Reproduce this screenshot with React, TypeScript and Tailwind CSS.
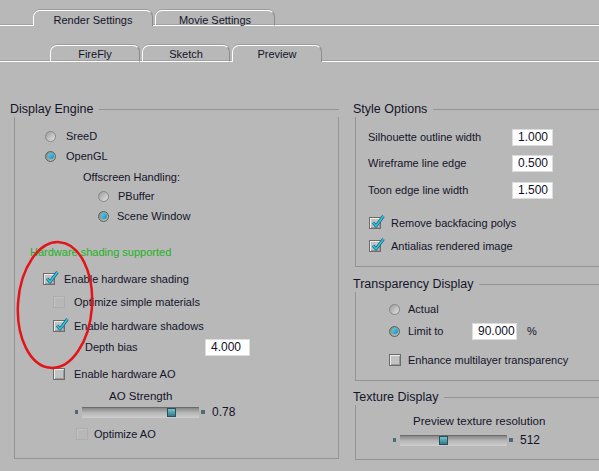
import React from "react";

const line = "border-[#949494]";

function Radio({ on }: { on?: boolean }) {
  return (
    <span
      className={
        on
          ? "flex h-[11px] w-[11px] shrink-0 items-center justify-center rounded-full border border-[#56645a] bg-gradient-to-br from-[#7d8a80] to-[#b9c4bc]"
          : "flex h-[11px] w-[11px] shrink-0 items-center justify-center rounded-full border border-[#858585] bg-gradient-to-br from-[#9c9c9c] to-[#e4e4e4]"
      }
    >
      {on && (
        <span className="h-[6px] w-[6px] rounded-full bg-gradient-to-br from-[#5fd0f4] to-[#1488c8]" />
      )}
    </span>
  );
}

function Check({ on, dim }: { on?: boolean; dim?: boolean }) {
  return (
    <span
      className={
        dim
          ? "relative block h-[12px] w-[12px] shrink-0 border border-[#adadad] shadow-[inset_1px_1px_0_#c2c2c2]"
          : "relative block h-[12px] w-[12px] shrink-0 border border-[#6c6c6c] bg-[#c2c2c2] shadow-[inset_1px_1px_0_#ececec,inset_-1px_-1px_0_#9a9a9a]"
      }
    >
      {on && (
        <svg
          className="absolute left-[1px] top-[-4px]"
          width="14"
          height="15"
          viewBox="0 0 14 15"
        >
          <path
            d="M2 8.5 L5 12 L12.5 2"
            fill="none"
            stroke="#2b5e6a"
            strokeWidth="3"
            strokeLinejoin="round"
          />
          <path
            d="M2 8.5 L5 12 L12.5 2"
            fill="none"
            stroke="#1fcbef"
            strokeWidth="1.6"
            strokeLinejoin="round"
          />
        </svg>
      )}
    </span>
  );
}

function Field({ value, className }: { value: string; className: string }) {
  return (
    <div
      className={`flex h-[17px] items-center border border-[#dcdcdc] bg-white pl-[5px] text-[12px] text-[#10102a] ${className}`}
    >
      {value}
    </div>
  );
}

function Slider({
  track,
  thumb,
  value,
}: {
  track: string;
  thumb: string;
  value: string;
}) {
  return (
    <div className="flex h-[12px] items-center">
      <span className="h-[4px] w-[3px] bg-[#4d6b72]" />
      <div
        className={`ml-[4px] flex h-[11px] items-center rounded-[1px] bg-gradient-to-b from-[#7e7e7e] via-[#b4b4b4] to-[#cfcfcf] shadow-[inset_0_1px_0_#6a6a6a] ${track}`}
      >
        <span
          className={`h-[9px] w-[9px] border border-[#24505a] bg-gradient-to-b from-[#7cc0cc] to-[#2f7d8c] ${thumb}`}
        />
      </div>
      <span className="ml-[2px] h-[4px] w-[4px] bg-[#4d6b72]" />
      <span className="ml-[7px] text-[12px]">{value}</span>
    </div>
  );
}

function Title({ text, shift }: { text: string; shift: string }) {
  return (
    <div className="flex h-[16px]">
      <span className={`pr-[6px] text-[12.5px] leading-[16px] ${shift}`}>
        {text}
      </span>
      <div className={`mt-[8px] flex-1 border-t ${line}`} />
    </div>
  );
}

export default function App() {
  return (
    <div className="relative h-[471px] w-[599px] overflow-hidden bg-[#b8b8b8] font-['Liberation_Sans',Arial,sans-serif] text-[11px] text-[#14142a]">
      {/* top tabs */}
      <div className="flex h-[26px] items-end">
        <div className="h-[2px] w-[33px] border-b border-white bg-[#a2a2a2]" />
        <div className="h-[16px] w-[120px] rounded-t-[7px] border-x border-t border-white border-r-[#8c8c8c] pt-[2px] text-center leading-[14px] shadow-[0_-1px_0_#9c9c9c]">
          Render Settings
        </div>
        <div className="h-[2px] w-[2px] border-b border-white bg-[#a2a2a2]" />
        <div className="h-[16px] w-[120px] rounded-t-[7px] border border-white border-r-[#8c8c8c] pt-[2px] text-center leading-[14px] shadow-[0_-1px_0_#9c9c9c,inset_0_-1px_0_#a2a2a2]">
          Movie Settings
        </div>
        <div className="h-[2px] flex-1 border-b border-white bg-[#a2a2a2]" />
      </div>
      <div className="flex h-[36px] items-end">
        <div className="h-[2px] w-[50px] border-b border-white bg-[#a2a2a2]" />
        <div className="h-[17px] w-[90px] rounded-t-[7px] border border-white border-r-[#8c8c8c] pt-[1px] text-center leading-[14px] shadow-[0_-1px_0_#9c9c9c,inset_0_-1px_0_#a2a2a2]">
          FireFly
        </div>
        <div className="h-[2px] w-[2px] border-b border-white bg-[#a2a2a2]" />
        <div className="h-[17px] w-[88px] rounded-t-[7px] border border-white border-r-[#8c8c8c] pt-[1px] text-center leading-[14px] shadow-[0_-1px_0_#9c9c9c,inset_0_-1px_0_#a2a2a2]">
          Sketch
        </div>
        <div className="h-[2px] w-[2px] border-b border-white bg-[#a2a2a2]" />
        <div className="h-[17px] w-[90px] rounded-t-[7px] border-x border-t border-white border-r-[#8c8c8c] pt-[1px] text-center leading-[14px] shadow-[0_-1px_0_#9c9c9c]">
          Preview
        </div>
        <div className="h-[2px] flex-1 border-b border-white bg-[#a2a2a2]" />
      </div>

      <div className="mt-[39px] flex">
        {/* Display Engine */}
        <div className="ml-[14px] w-[325px] shrink-0">
          <Title text="Display Engine" shift="-ml-[4px]" />
          <div className={`flex h-[342px] flex-col border-x border-b ${line}`}>
            <div className="mt-[11px] flex h-[16px] items-center pl-[30px]">
              <Radio />
              <span className="ml-[10px]">SreeD</span>
            </div>
            <div className="mt-[4px] flex h-[16px] items-center pl-[30px]">
              <Radio on />
              <span className="ml-[10px]">OpenGL</span>
            </div>
            <div className="mt-[5px] flex h-[16px] items-center pl-[68px]">
              Offscreen Handling:
            </div>
            <div className="mt-[3px] flex h-[16px] items-center pl-[83px]">
              <Radio />
              <span className="ml-[9px]">PBuffer</span>
            </div>
            <div className="mt-[4px] flex h-[16px] items-center pl-[83px]">
              <Radio on />
              <span className="ml-[8px]">Scene Window</span>
            </div>
            <div className="mt-[20px] flex h-[16px] items-center pl-[15px] text-[#22b322]">
              Hardware shading supported
            </div>
            <div className="mt-[11px] flex h-[16px] items-center pl-[28px]">
              <Check on />
              <span className="ml-[9px]">Enable hardware shading</span>
            </div>
            <div className="mt-[7px] flex h-[16px] items-center pl-[38px]">
              <Check dim />
              <span className="ml-[9px]">Optimize simple materials</span>
            </div>
            <div className="mt-[8px] flex h-[16px] items-center pl-[38px]">
              <Check on />
              <span className="ml-[9px]">Enable hardware shadows</span>
            </div>
            <div className="mt-[4px] flex h-[18px] items-center pl-[70px]">
              <span className="w-[120px]">Depth bias</span>
              <Field value="4.000" className="w-[45px]" />
            </div>
            <div className="mt-[10px] flex h-[16px] items-center pl-[38px]">
              <Check />
              <span className="ml-[9px]">Enable hardware AO</span>
            </div>
            <div className="mt-[7px] flex h-[16px] items-center pl-[94px] text-[11.5px]">
              AO Strength
            </div>
            <div className="mt-[1px] pl-[60px]">
              <Slider track="w-[117px]" thumb="ml-[85px]" value="0.78" />
            </div>
            <div className="mt-[8px] flex h-[16px] items-center pl-[61px]">
              <Check dim />
              <span className="ml-[6px]">Optimize AO</span>
            </div>
          </div>
        </div>

        {/* right column */}
        <div className="ml-[16px] w-[260px] shrink-0">
          <Title text="Style Options" shift="-ml-[2px]" />
          <div className={`flex h-[150px] flex-col border-x border-b ${line}`}>
            <div className="mt-[11px] flex h-[18px] items-center pl-[12px]">
              <span className="w-[144px]">Silhouette outline width</span>
              <Field value="1.000" className="w-[41px]" />
            </div>
            <div className="mt-[8px] flex h-[18px] items-center pl-[12px]">
              <span className="w-[144px]">Wireframe line edge</span>
              <Field value="0.500" className="w-[41px]" />
            </div>
            <div className="mt-[9px] flex h-[18px] items-center pl-[12px]">
              <span className="w-[144px]">Toon edge line width</span>
              <Field value="1.500" className="w-[41px]" />
            </div>
            <div className="mt-[16px] flex h-[16px] items-center pl-[13px]">
              <Check on />
              <span className="ml-[10px]">Remove backfacing polys</span>
            </div>
            <div className="mt-[7px] flex h-[16px] items-center pl-[13px]">
              <Check on />
              <span className="ml-[10px]">Antialias rendered image</span>
            </div>
          </div>

          <div className="mt-[9px]">
            <Title text="Transparency Display" shift="-ml-[2px]" />
          </div>
          <div className={`flex h-[89px] flex-col border-x border-b ${line}`}>
            <div className="mt-[9px] flex h-[16px] items-center pl-[33px]">
              <Radio />
              <span className="ml-[8px]">Actual</span>
            </div>
            <div className="mt-[5px] flex h-[18px] items-center pl-[33px]">
              <Radio on />
              <span className="ml-[8px] w-[64px]">Limit to</span>
              <Field value="90.000" className="w-[45px]" />
              <span className="ml-[10px]">%</span>
            </div>
            <div className="mt-[12px] flex h-[16px] items-center pl-[33px]">
              <Check />
              <span className="ml-[7px]">Enhance multilayer transparency</span>
            </div>
          </div>

          <div className="mt-[8px]">
            <Title text="Texture Display" shift="-ml-[2px]" />
          </div>
          <div className={`flex h-[55px] flex-col border-x border-b ${line}`}>
            <div className="mt-[9px] flex h-[16px] items-center pl-[57px] text-[11.5px]">
              Preview texture resolution
            </div>
            <div className="mt-[4px] pl-[37px]">
              <Slider track="w-[107px]" thumb="ml-[39px]" value="512" />
            </div>
          </div>
        </div>
      </div>

      {/* red annotation ellipse */}
      <svg
        className="pointer-events-none absolute left-[14px] top-[239px]"
        width="84"
        height="134"
        viewBox="0 0 84 134"
      >
        <ellipse
          cx="41"
          cy="66"
          rx="37"
          ry="63"
          transform="rotate(4 41 66)"
          fill="none"
          stroke="#e2161a"
          strokeWidth="2.5"
        />
      </svg>
    </div>
  );
}
